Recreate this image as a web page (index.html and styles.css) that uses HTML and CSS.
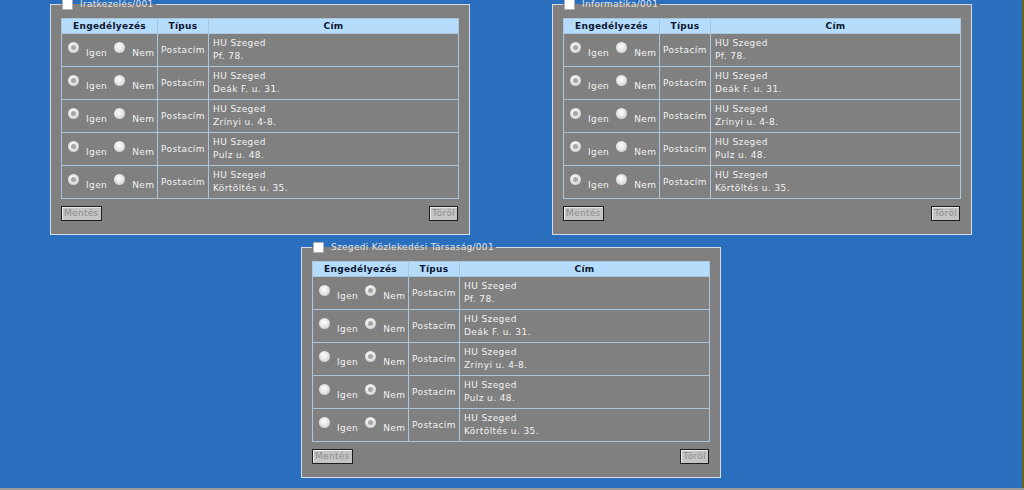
FILE: index.html
```html
<!DOCTYPE html>
<html lang="hu">
<head>
<meta charset="utf-8">
<title>Címek engedélyezése</title>
<link rel="stylesheet" href="styles.css">
</head>
<body>
<div class="page">
  <div class="row row-top">
    <fieldset class="unit">
      <legend class="unit-legend"><span class="check"></span><span class="legend-text">Iratkezelés/001</span></legend>
      <table class="addr">
        <colgroup><col class="w-eng"><col class="w-tip"><col></colgroup>
        <thead><tr><th>Engedélyezés</th><th>Típus</th><th>Cím</th></tr></thead>
        <tbody>
          <tr><td class="eng"><span class="radio on"></span><span class="rl">Igen</span><span class="radio"></span><span class="rl">Nem</span></td><td class="tip">Postacím</td><td class="cim">HU Szeged<br>Pf. 78.</td></tr>
          <tr><td class="eng"><span class="radio on"></span><span class="rl">Igen</span><span class="radio"></span><span class="rl">Nem</span></td><td class="tip">Postacím</td><td class="cim">HU Szeged<br>Deák F. u. 31.</td></tr>
          <tr><td class="eng"><span class="radio on"></span><span class="rl">Igen</span><span class="radio"></span><span class="rl">Nem</span></td><td class="tip">Postacím</td><td class="cim">HU Szeged<br>Zrínyi u. 4-8.</td></tr>
          <tr><td class="eng"><span class="radio on"></span><span class="rl">Igen</span><span class="radio"></span><span class="rl">Nem</span></td><td class="tip">Postacím</td><td class="cim">HU Szeged<br>Pulz u. 48.</td></tr>
          <tr><td class="eng"><span class="radio on"></span><span class="rl">Igen</span><span class="radio"></span><span class="rl">Nem</span></td><td class="tip">Postacím</td><td class="cim">HU Szeged<br>Körtöltés u. 35.</td></tr>
        </tbody>
      </table>
      <div class="actions"><span class="btn">Mentés</span><span class="btn">Töröl</span></div>
    </fieldset>
    <fieldset class="unit">
      <legend class="unit-legend"><span class="check"></span><span class="legend-text">Informatika/001</span></legend>
      <table class="addr">
        <colgroup><col class="w-eng"><col class="w-tip"><col></colgroup>
        <thead><tr><th>Engedélyezés</th><th>Típus</th><th>Cím</th></tr></thead>
        <tbody>
          <tr><td class="eng"><span class="radio on"></span><span class="rl">Igen</span><span class="radio"></span><span class="rl">Nem</span></td><td class="tip">Postacím</td><td class="cim">HU Szeged<br>Pf. 78.</td></tr>
          <tr><td class="eng"><span class="radio on"></span><span class="rl">Igen</span><span class="radio"></span><span class="rl">Nem</span></td><td class="tip">Postacím</td><td class="cim">HU Szeged<br>Deák F. u. 31.</td></tr>
          <tr><td class="eng"><span class="radio on"></span><span class="rl">Igen</span><span class="radio"></span><span class="rl">Nem</span></td><td class="tip">Postacím</td><td class="cim">HU Szeged<br>Zrínyi u. 4-8.</td></tr>
          <tr><td class="eng"><span class="radio on"></span><span class="rl">Igen</span><span class="radio"></span><span class="rl">Nem</span></td><td class="tip">Postacím</td><td class="cim">HU Szeged<br>Pulz u. 48.</td></tr>
          <tr><td class="eng"><span class="radio on"></span><span class="rl">Igen</span><span class="radio"></span><span class="rl">Nem</span></td><td class="tip">Postacím</td><td class="cim">HU Szeged<br>Körtöltés u. 35.</td></tr>
        </tbody>
      </table>
      <div class="actions"><span class="btn">Mentés</span><span class="btn">Töröl</span></div>
    </fieldset>
  </div>
  <div class="row row-center">
    <fieldset class="unit">
      <legend class="unit-legend"><span class="check"></span><span class="legend-text">Szegedi Közlekedési Társaság/001</span></legend>
      <table class="addr">
        <colgroup><col class="w-eng"><col class="w-tip"><col></colgroup>
        <thead><tr><th>Engedélyezés</th><th>Típus</th><th>Cím</th></tr></thead>
        <tbody>
          <tr><td class="eng"><span class="radio"></span><span class="rl">Igen</span><span class="radio on"></span><span class="rl">Nem</span></td><td class="tip">Postacím</td><td class="cim">HU Szeged<br>Pf. 78.</td></tr>
          <tr><td class="eng"><span class="radio"></span><span class="rl">Igen</span><span class="radio on"></span><span class="rl">Nem</span></td><td class="tip">Postacím</td><td class="cim">HU Szeged<br>Deák F. u. 31.</td></tr>
          <tr><td class="eng"><span class="radio"></span><span class="rl">Igen</span><span class="radio on"></span><span class="rl">Nem</span></td><td class="tip">Postacím</td><td class="cim">HU Szeged<br>Zrínyi u. 4-8.</td></tr>
          <tr><td class="eng"><span class="radio"></span><span class="rl">Igen</span><span class="radio on"></span><span class="rl">Nem</span></td><td class="tip">Postacím</td><td class="cim">HU Szeged<br>Pulz u. 48.</td></tr>
          <tr><td class="eng"><span class="radio"></span><span class="rl">Igen</span><span class="radio on"></span><span class="rl">Nem</span></td><td class="tip">Postacím</td><td class="cim">HU Szeged<br>Körtöltés u. 35.</td></tr>
        </tbody>
      </table>
      <div class="actions"><span class="btn">Mentés</span><span class="btn">Töröl</span></div>
    </fieldset>
  </div>
</div>
</body>
</html>
```
FILE: styles.css
```css
html, body {
  margin: 0;
  padding: 0;
  background: #9c9c9c;
}
body {
  font-family: "DejaVu Sans", Verdana, sans-serif;
  font-size: 9px;
  color: #f2f2f2;
}
.page {
  width: 1022px;
  height: 488px;
  background: #2a6fbd;
  border-right: 2px solid #6e6520;
  overflow: hidden;
}
.row {
  display: flex;
}
.row-top {
  justify-content: space-between;
  padding: 0 50px 0 50px;
  margin-top: -2px;
}
.row-center {
  justify-content: center;
  margin-top: 6px;
}
.unit {
  box-sizing: border-box;
  width: 420px;
  margin: 0;
  padding: 0 10px 13px 10px;
  border: 1px solid #d4dce6;
  background: #808080;
}
.unit-legend {
  padding: 0 2px 0 1px;
  margin: 0;
  display: flex;
  align-items: center;
  line-height: 12px;
}
.check {
  display: inline-block;
  width: 9px;
  height: 9px;
  background: #ffffff;
  border: 1px solid #b0b0b0;
  border-radius: 1px;
  margin-right: 7px;
}
.legend-text {
  color: #e4e4e4;
  letter-spacing: 0.3px;
}
.addr {
  width: 100%;
  table-layout: fixed;
  border-collapse: collapse;
  margin-top: 8px;
  border: 1px solid #a9c6dc;
}
.w-eng { width: 96px; }
.w-tip { width: 51px; }
.addr th {
  background: #b5dcfa;
  color: #0a1530;
  font-weight: bold;
  height: 14px;
  padding: 0;
  letter-spacing: 0.3px;
  border: 1px solid #a9c6dc;
  white-space: nowrap;
}
.addr td {
  border: 1px solid #a9c6dc;
  height: 32px;
  padding: 0;
  letter-spacing: 0.4px;
}
.eng {
  white-space: nowrap;
  padding-left: 6px !important;
}
.radio {
  display: inline-block;
  width: 11px;
  height: 11px;
  border-radius: 50%;
  background: radial-gradient(circle at 45% 40%, #ffffff 0%, #e6e6e6 45%, #bdbdbd 100%);
  vertical-align: 1px;
  position: relative;
}
.radio.on::after {
  content: "";
  position: absolute;
  left: 3px;
  top: 3px;
  width: 5px;
  height: 5px;
  border-radius: 50%;
  background: #a6a6a6;
}
.rl {
  display: inline-block;
  margin: 0 7px 0 7px;
  vertical-align: -2px;
}
.tip {
  text-align: center;
  white-space: nowrap;
}
.cim {
  padding-left: 4px !important;
  line-height: 13px;
}
.actions {
  display: flex;
  justify-content: space-between;
  margin-top: 7px;
}
.btn {
  display: inline-block;
  box-sizing: border-box;
  height: 15px;
  line-height: 12px;
  padding: 0 2px;
  background: #c4c4c4;
  color: #8c8c8c;
  border: 1px solid #1e1e1e;
  box-shadow: inset 1px 1px 0 #ececec;
  letter-spacing: 0.3px;
}
.btn:last-child {
  margin-right: 1px;
}
```
